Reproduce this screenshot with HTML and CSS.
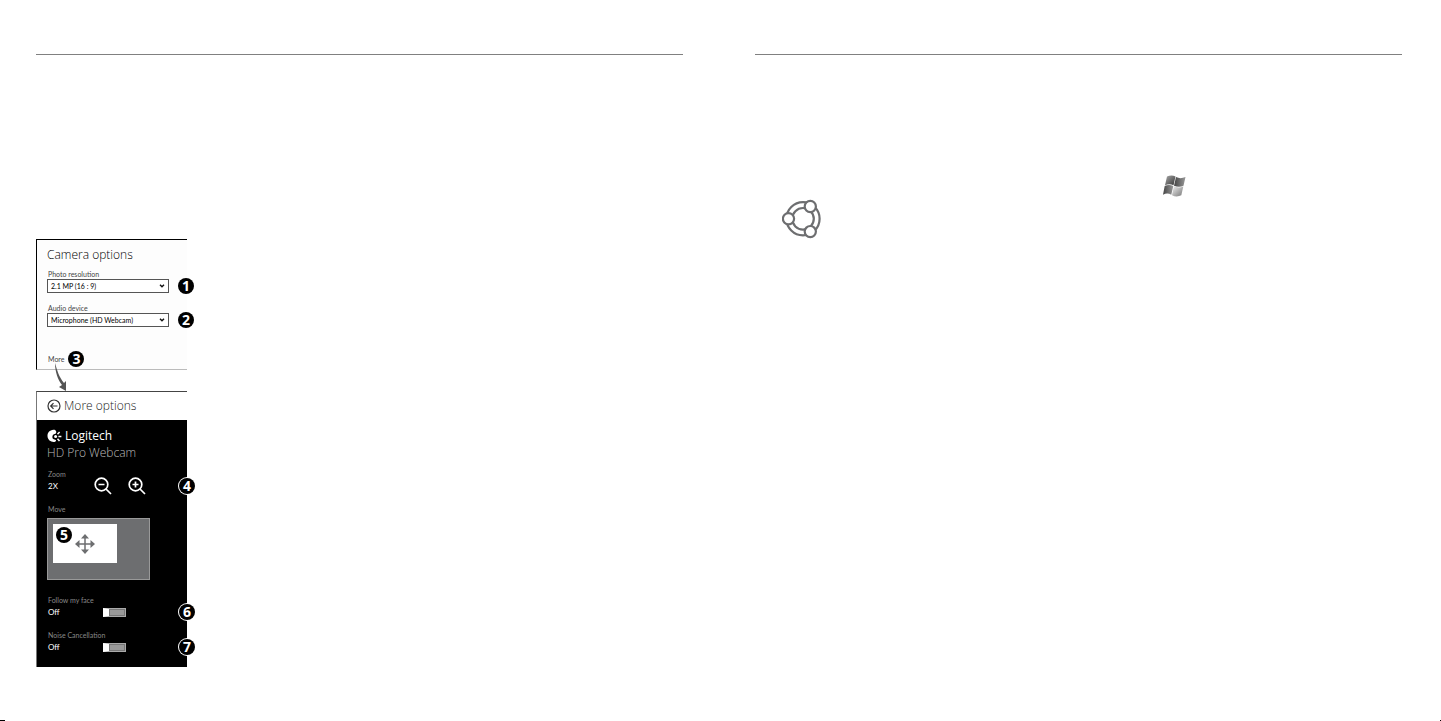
FILE: index.html
```html
<!DOCTYPE html>
<html lang="en">
<head>
    <meta charset="UTF-8">
    <meta name="viewport" content="width=device-width, initial-scale=1.0">
    <title>HD Pro Webcam</title>
    <link rel="stylesheet" href="styles.css">
</head>
<body>
    <main class="spread">
        <section class="page">
            <div class="figure">
                <div class="camera-panel">
                    <h1>Camera options</h1>
                    <div class="field">
                        <label for="resolution">Photo resolution</label>
                        <div class="select-wrap">
                            <select id="resolution"><option>2.1 MP (16 : 9)</option></select>
                            <svg class="chevron" viewBox="0 0 6 4"><path d="M1 .8 3 2.8 5 .8"/></svg>
                            <span class="badge">1</span>
                        </div>
                    </div>
                    <div class="field">
                        <label for="audio">Audio device</label>
                        <div class="select-wrap">
                            <select id="audio"><option>Microphone (HD Webcam)</option></select>
                            <svg class="chevron" viewBox="0 0 6 4"><path d="M1 .8 3 2.8 5 .8"/></svg>
                            <span class="badge">2</span>
                        </div>
                    </div>
                    <div class="more">
                        <a href="#more">More</a>
                        <span class="badge badge-inline">3</span>
                    </div>
                </div>

                <svg class="pointer" viewBox="0 0 18 28">
                    <path d="M4 0C4 9 7 17 11 22L8 24 15 28 15 18 13 20C8 14 6 7 4 0Z"/>
                </svg>

                <div class="more-panel" id="more">
                    <div class="more-header">
                        <button class="back" aria-label="Back">
                            <svg viewBox="0 0 14 14"><circle cx="7" cy="7" r="6"/><path d="M10.500 7H4M6.500 4.200 3.700 7l2.800 2.800"/></svg>
                        </button>
                        <h2>More options</h2>
                    </div>
                    <div class="device">
                        <div class="brand">
                            <svg viewBox="0 0 15 14">
                                <path class="fill" d="M6.500.8C2.500 1 .3 4 .5 7.300.7 11 4 13.300 7.300 13c1.300-.1 1.900-.9 1.700-1.700-.2-.7-.9-.8-1.700-.9C5.800 10 5.200 8.800 5.400 7.400 5.600 6 6.500 5.400 7.800 5.100 9 4.700 9.500 3.700 9.200 2.500 8.900 1.300 7.800.7 6.500.8Z"/>
                                <circle class="fill" cx="8.600" cy="7.600" r="1.500"/>
                                <path class="ray" d="M10.500 5.200 12.600 3M11.400 7.500h3M10.500 9.700l2 2.200"/>
                            </svg>
                            <span>Logitech</span>
                        </div>
                        <p class="model">HD Pro Webcam</p>

                        <p class="caption">Zoom</p>
                        <div class="row">
                            <span class="value">2X</span>
                            <button class="zoom" aria-label="Zoom out">
                                <svg viewBox="0 0 18 18"><circle cx="7.500" cy="7.500" r="6.300"/><path d="M4.500 7.500h6M12 12l5 5"/></svg>
                            </button>
                            <button class="zoom" aria-label="Zoom in">
                                <svg viewBox="0 0 18 18"><circle cx="7.500" cy="7.500" r="6.300"/><path d="M4.500 7.500h6M7.500 4.500v6M12 12l5 5"/></svg>
                            </button>
                            <span class="badge badge-ring">4</span>
                        </div>

                        <p class="caption">Move</p>
                        <div class="move-area">
                            <div class="move-view">
                                <span class="badge badge-inline">5</span>
                                <svg viewBox="0 0 20 20">
                                    <path class="line" d="M10 3v14M3 10h14"/>
                                    <path d="M10 0l4 4.500H6ZM10 20l4-4.500H6ZM0 10l4.500-4v8ZM20 10l-4.500-4v8Z"/>
                                </svg>
                            </div>
                        </div>

                        <label class="caption" for="follow">Follow my face</label>
                        <div class="row">
                            <span class="value">Off</span>
                            <input class="toggle" type="checkbox" id="follow">
                            <span class="badge badge-ring">6</span>
                        </div>

                        <label class="caption" for="noise">Noise Cancellation</label>
                        <div class="row">
                            <span class="value">Off</span>
                            <input class="toggle" type="checkbox" id="noise">
                            <span class="badge badge-ring">7</span>
                        </div>
                    </div>
                </div>
            </div>
        </section>

        <section class="page">
            <div class="logos">
                <svg class="share" viewBox="0 0 40 40">
                    <circle class="band" cx="21" cy="19.800" r="13.700"/>
                    <circle class="gap" cx="21" cy="19.800" r="13.700"/>
                    <circle class="node" cx="6.500" cy="19.800" r="5.600"/>
                    <circle class="node" cx="28.300" cy="7.500" r="5.600"/>
                    <circle class="node" cx="28.300" cy="32.600" r="5.600"/>
                </svg>
                <svg class="windows" viewBox="0 0 24 22">
                    <defs>
                        <linearGradient id="dark" x1="0" y1="0" x2="1" y2="1">
                            <stop offset="0" stop-color="#aaa"/>
                            <stop offset="1" stop-color="#333"/>
                        </linearGradient>
                        <linearGradient id="mid" x1="0" y1="0" x2="1" y2="0">
                            <stop offset="0" stop-color="#444"/>
                            <stop offset="1" stop-color="#999"/>
                        </linearGradient>
                        <linearGradient id="light" x1="0" y1="0" x2="1" y2="1">
                            <stop offset="0" stop-color="#eee"/>
                            <stop offset="1" stop-color="#777"/>
                        </linearGradient>
                    </defs>
                    <path fill="url(#dark)" d="M4 1.500C7 0 10 0 12.500 1.500L10.500 10.300C8 9 5 9 2 10.300Z"/>
                    <path fill="url(#mid)" d="M13 2C16 3.500 19 3.500 22.500 2L20.500 10.800C17.500 12.200 14 12 11 10.700Z"/>
                    <path fill="url(#mid)" d="M1.700 11C4.500 9.700 7.500 9.700 10.300 11L8.300 19.800C5.500 18.200 3 18.200 0 19.700Z"/>
                    <path fill="url(#light)" d="M10.900 11.300C14 12.800 17.300 12.800 20.300 11.500L18.300 20.300C15.300 21.800 12 21.800 9 20.200Z"/>
                </svg>
            </div>
        </section>
    </main>
    <footer class="marks">
        <span class="mark mark-left"></span>
        <span class="mark"></span>
    </footer>
</body>
</html>
```
FILE: styles.css
```css
* {
    box-sizing: border-box;
}
body {
    margin: 0;
    min-height: 100vh;
    display: flex;
    flex-direction: column;
    justify-content: space-between;
    background-color: #fff;
    color: #222;
    font-family: Lato, "Open Sans", sans-serif;
}
h1, h2, p {
    margin: 0;
    font-weight: 400;
}
h1, h2, .brand, .model {
    font-family: "Open Sans", sans-serif;
    font-size: 12px;
    line-height: 18px;
}
svg {
    display: block;
    flex: none;
}
button {
    padding: 0;
    border: none;
    background: none;
    cursor: pointer;
}
.spread {
    display: grid;
    grid-template-columns: 1fr 1fr;
    gap: 72px;
    padding: 54px 39px 0 36px;
}
.page {
    border-top: 1px solid #808080;
}
.figure {
    width: 151px;
    margin-top: 184px;
}

/* camera options */
.camera-panel {
    padding: 6px 18px 5px 10px;
    border-top: 1px solid #000;
    border-left: 1px solid #000;
    border-bottom: 1px solid #bbb;
    background-color: #fdfdfd;
}
.camera-panel h1 {
    margin-bottom: 5px;
    font-weight: 300;
    color: #000;
}
.field {
    margin-bottom: 10px;
}
.field label {
    display: block;
    padding-left: 1px;
    font-size: 7px;
    line-height: 10px;
    color: #444;
}
.select-wrap {
    position: relative;
    display: flex;
    align-items: center;
}
select {
    appearance: none;
    width: 100%;
    height: 14px;
    padding: 0 3px;
    border: 1px solid #555;
    border-radius: 0;
    background-color: #fff;
    font-family: inherit;
    font-size: 7px;
    line-height: 12px;
    color: #000;
}
.chevron {
    position: absolute;
    right: 4px;
    width: 6px;
    height: 4px;
    fill: none;
    stroke: #111;
    stroke-width: 1.4;
    pointer-events: none;
}
.more {
    display: flex;
    align-items: center;
    gap: 4px;
    height: 10px;
    margin-top: 27px;
    padding-left: 1px;
}
.more a {
    font-size: 7px;
    line-height: 10px;
    color: #444;
    text-decoration: none;
}

/* numbered callouts */
.badge {
    position: absolute;
    right: -25px;
    display: flex;
    align-items: center;
    justify-content: center;
    width: 16px;
    height: 16px;
    border-radius: 50%;
    background-color: #000;
    color: #fff;
    font-family: "Open Sans", sans-serif;
    font-size: 14px;
    line-height: 16px;
    font-weight: 700;
}
.badge-inline {
    position: static;
    flex: none;
}
.badge-ring {
    right: -8px;
    box-shadow: 0 0 0 1px #fff;
}
.pointer {
    width: 18px;
    height: 28px;
    margin: -7px 0 0 15px;
    fill: #555;
}

/* more options */
.more-panel {
    border-top: 1px solid #444;
    border-left: 1px solid #777;
}
.more-header {
    display: flex;
    align-items: center;
    gap: 3px;
    height: 28px;
    padding-left: 10px;
}
.more-header h2 {
    font-weight: 300;
    color: #222;
}
.back svg {
    width: 14px;
    height: 14px;
    fill: none;
    stroke: #333;
    stroke-width: 1.2;
}
.device {
    padding: 7px 0 13px 10px;
    background-color: #000;
    color: #fff;
}
.brand {
    display: flex;
    align-items: center;
    gap: 3px;
    height: 17px;
}
.brand svg {
    width: 15px;
    height: 14px;
}
.brand .fill {
    fill: #fff;
}
.brand .ray {
    fill: none;
    stroke: #fff;
    stroke-width: 1.5;
}
.model {
    font-weight: 300;
    color: #bbb;
}
.caption {
    display: block;
    margin-top: 7px;
    padding-left: 1px;
    font-size: 7px;
    line-height: 10px;
    color: #888;
}
.row + .caption {
    margin-top: 11px;
}
.row {
    position: relative;
    display: flex;
    align-items: center;
    height: 14px;
    padding-left: 1px;
}
.value {
    width: 46px;
    font-size: 8px;
    line-height: 14px;
}
.zoom {
    margin-right: 16px;
}
.zoom svg {
    width: 18px;
    height: 18px;
    fill: none;
    stroke: #fff;
    stroke-width: 1.7;
}
.move-area {
    width: 103px;
    height: 62px;
    margin: 4px 0 15px;
    padding: 5px;
    border: 1px solid #999;
    background-color: #6d6e70;
}
.move-view {
    display: flex;
    align-items: center;
    gap: 3px;
    width: 64px;
    height: 39px;
    padding-left: 3px;
    background-color: #fff;
}
.move-view .badge {
    align-self: flex-start;
    margin-top: 3px;
}
.move-view svg {
    width: 20px;
    height: 20px;
    fill: #6d6e70;
}
.move-view .line {
    stroke: #6d6e70;
    stroke-width: 1.5;
}
.toggle {
    appearance: none;
    width: 23px;
    height: 9px;
    margin: 0 0 0 9px;
    border: 1px solid #aaa;
    border-left: 6px solid #fff;
    background-color: #999;
    box-shadow: inset 0 0 0 1px #777;
}

/* right page */
.logos {
    display: flex;
    gap: 341px;
    margin-top: 120px;
    padding-left: 27px;
}
.share {
    width: 40px;
    height: 40px;
    margin-top: 24px;
    fill: none;
}
.share .band {
    stroke: #6d6e70;
    stroke-width: 8;
}
.share .gap {
    stroke: #fff;
    stroke-width: 3.6;
}
.share .node {
    fill: #fff;
    stroke: #6d6e70;
    stroke-width: 2.2;
}
.windows {
    width: 24px;
    height: 22px;
}

.marks {
    display: flex;
    justify-content: space-between;
}
.mark {
    width: 1px;
    height: 1px;
    background-color: #000;
}
.mark-left {
    width: 5px;
}
```
